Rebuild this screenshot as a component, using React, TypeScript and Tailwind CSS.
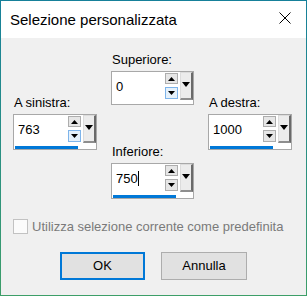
import React from 'react';

const font = "font-['Liberation_Sans',Arial,sans-serif]";

const ArrowUp = () => (
  <svg width="7" height="4" viewBox="0 0 7 4" className="block">
    <path d="M0 4 L3.5 0 L7 4 Z" fill="#000" />
  </svg>
);

const ArrowDown = ({ w = 7, h = 4 }: { w?: number; h?: number }) => (
  <svg width={w} height={h} viewBox={`0 0 ${w} ${h}`} className="block">
    <path d={`M0 0 L${w} 0 L${w / 2} ${h} Z`} fill="#000" />
  </svg>
);

type FieldProps = {
  label: string;
  value: string;
  focused?: boolean;
  hoverDown?: boolean;
  caret?: boolean;
  width: string;
};

const SpinField: React.FC<FieldProps> = ({ label, value, focused, hoverDown, caret, width }) => {
  return (
    <div className={`flex flex-col ${width}`}>
      <label className="text-[13px] leading-4 text-black mb-[3px] pl-px">{label}</label>
      <div
        className={`flex flex-col border border-[#a8a8a8] bg-white ${focused ? 'h-[36px]' : 'h-[34px]'}`}
      >
        <div className="flex items-start h-[29px]">
          <div className="flex-1 self-center flex items-center pl-[4px] text-[13px] leading-4 text-black">
            {value}
            {caret && <span className="inline-block w-px h-[15px] bg-black" />}
          </div>
          <div className="flex flex-col gap-[3px] mt-[1px] w-[13px]">
            <div className="h-[11px] flex items-center justify-center border border-[#adadad] bg-[#e6e6e6]">
              <ArrowUp />
            </div>
            <div
              className={`h-[12px] flex items-center justify-center border ${
                hoverDown ? 'border-[#7eb4ea] bg-[#e5f1fb]' : 'border-[#adadad] bg-[#e6e6e6]'
              }`}
            >
              <ArrowDown />
            </div>
          </div>
          <div className="ml-[2px] w-[13px] h-[28px] flex justify-center pt-[9px] bg-[#ececec] border-l border-t border-[#dcdcdc] border-r-2 border-r-[#6a6a6a] border-b-2 border-b-[#8e8e8e]">
            <ArrowDown w={8} h={5} />
          </div>
        </div>
        {focused && <div className="mt-auto ml-px w-[63px] h-[3px] bg-[#0078d7]" />}
      </div>
    </div>
  );
};

export default function App() {
  return (
    <div className={`w-[307px] h-[296px] p-px bg-linear-to-b from-[#16809a] to-[#3d9e68] ${font}`}>
      <div className="flex flex-col h-full bg-[#f0f0f0]">
        <div className="h-[37px] bg-white flex items-center justify-between pl-[9px] pr-[15px]">
          <span className="text-[15px] leading-5 text-black">Selezione personalizzata</span>
          <svg width="12" height="12" viewBox="0 0 12 12" className="mb-[3px]">
            <path d="M0.5 0.5 L11.5 11.5 M11.5 0.5 L0.5 11.5" stroke="#000" strokeWidth="1" />
          </svg>
        </div>

        <div className="flex pl-[12px] gap-[14px]">
          <div className="pt-[57px]">
            <SpinField label="A sinistra:" value="763" focused hoverDown width="w-[84px]" />
          </div>
          <div className="flex flex-col pt-[14px] gap-[39px]">
            <SpinField label="Superiore:" value="0" hoverDown width="w-[83px]" />
            <SpinField label="Inferiore:" value="750" focused caret width="w-[83px]" />
          </div>
          <div className="pt-[57px]">
            <SpinField label="A destra:" value="1000" focused width="w-[84px]" />
          </div>
        </div>

        <div className="flex items-center gap-[4px] pl-[12px] mt-[20px] h-[15px]">
          <div className="w-[15px] h-[15px] border border-[#c2c2c2] bg-[#fbfbfb]" />
          <span className="text-[13px] leading-4 text-[#7a7a7a]">
            Utilizza selezione corrente come predefinita
          </span>
        </div>

        <div className="flex justify-center gap-[16px] mt-[18px]">
          <button className="w-[85px] h-[28px] border-2 border-[#0078d7] bg-[#e1e1e1] text-[13px] text-black">
            OK
          </button>
          <button className="w-[86px] h-[28px] border border-[#adadad] bg-[#e1e1e1] text-[13px] text-black">
            Annulla
          </button>
        </div>
      </div>
    </div>
  );
}
